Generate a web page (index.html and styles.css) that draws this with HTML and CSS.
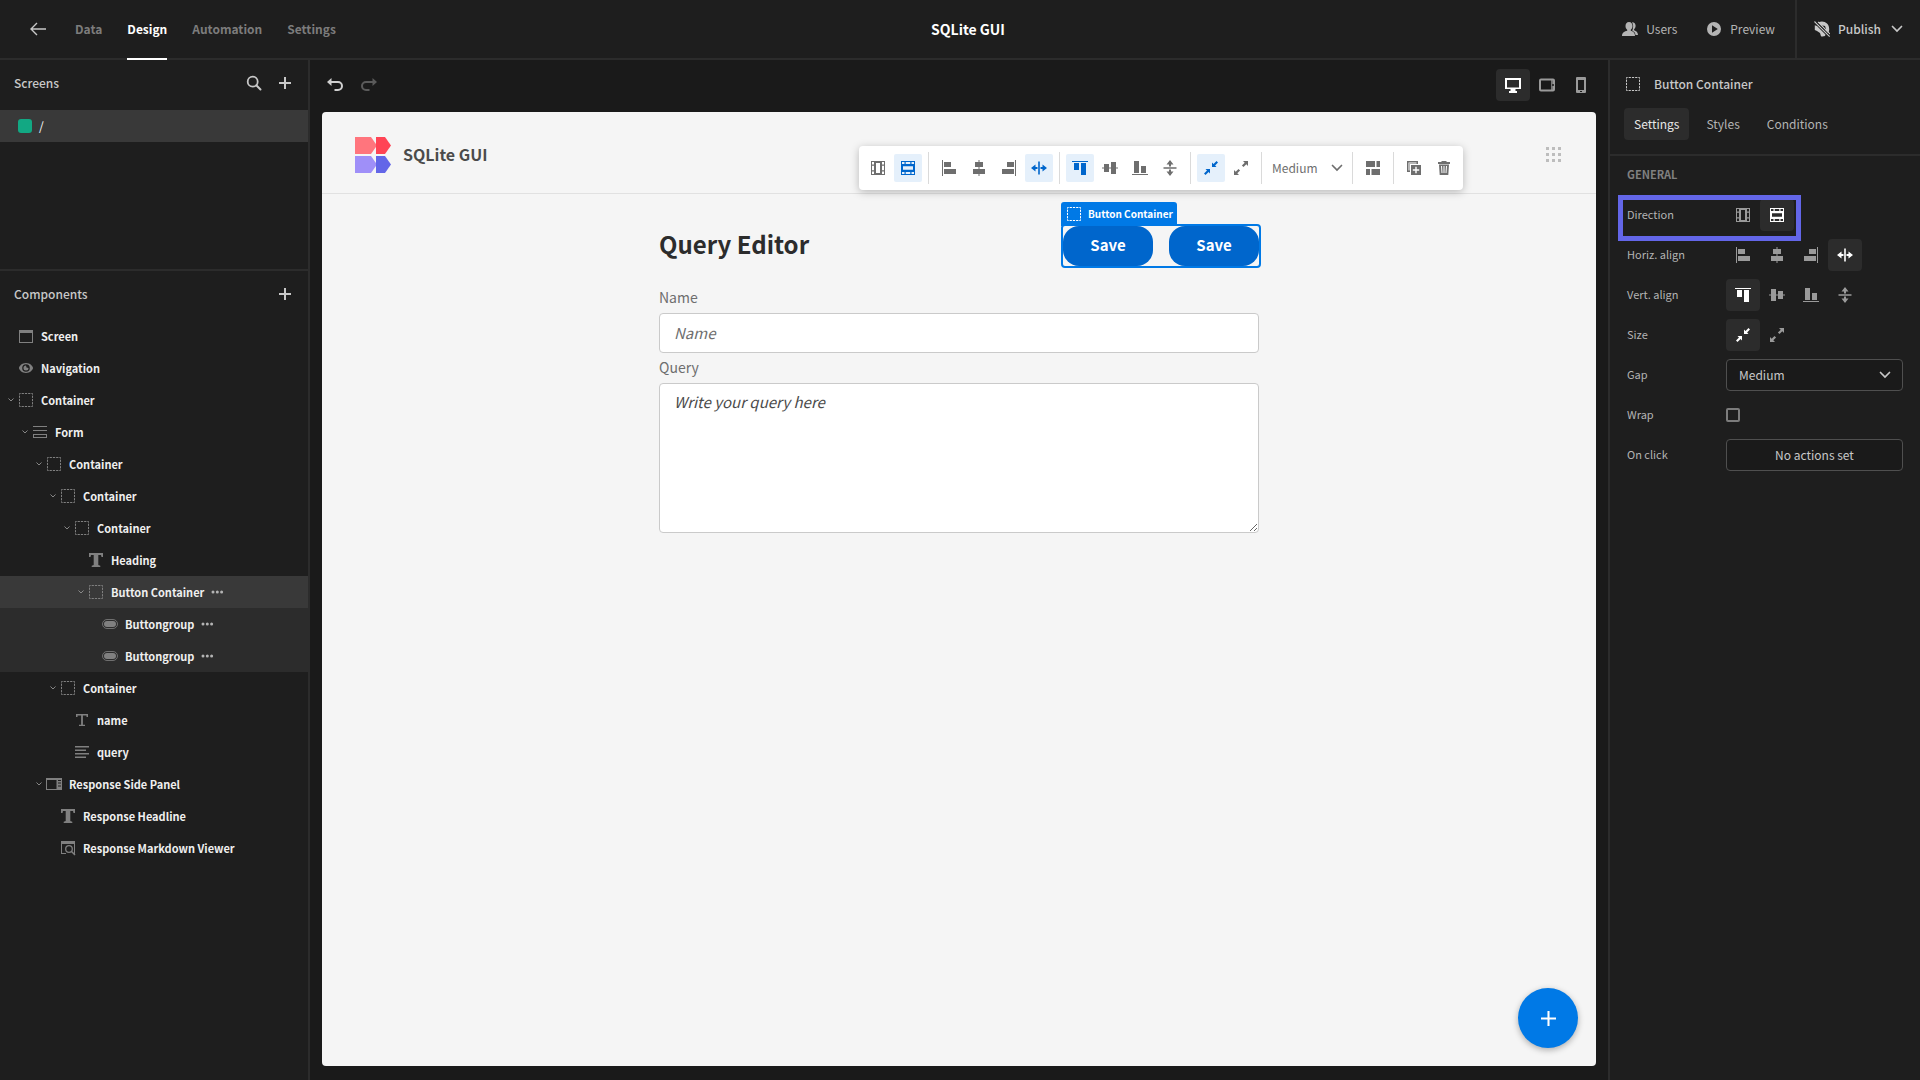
FILE: index.html
```html
<!DOCTYPE html>
<html lang="en">
<head>
<meta charset="utf-8">
<title>SQLite GUI</title>
<link rel="stylesheet" href="styles.css">
</head>
<body>
<svg class="sprite" aria-hidden="true">
  <symbol id="i-back" viewBox="0 0 16 16"><path d="M1 8h15M7 2L1 8l6 6" fill="none" stroke="currentColor" stroke-width="1.4"/></symbol>
  <symbol id="i-search" viewBox="0 0 16 16"><circle cx="6.7" cy="6.7" r="5" fill="none" stroke="currentColor" stroke-width="1.8"/><path d="M10.3 10.3L14.5 14.5" stroke="currentColor" stroke-width="2" stroke-linecap="round"/></symbol>
  <symbol id="i-plus" viewBox="0 0 16 16"><path d="M2 8h12M8 2v12" stroke="currentColor" stroke-width="2"/></symbol>
  <symbol id="i-undo" viewBox="0 0 18 16"><path d="M4 5h8a4 4 0 0 1 0 8H8.500" fill="none" stroke="currentColor" stroke-width="2"/><path d="M1 5l4.500-4v8z" fill="currentColor"/></symbol>
  <symbol id="i-users" viewBox="0 0 16 16"><path d="M10 1.200c2.500 0 3.600 1.600 3.600 3.600 0 1.500-.6 2.700-1.500 3.500v1c2 .7 3.900 1.900 3.900 4.700h-2.500c-.2-2.200-1.400-3.500-3.200-4.300C11.500 6.600 11.500 3 10 1.200z" fill="currentColor"/><path d="M7 1c2.300 0 3.500 1.700 3.500 4 0 1.700-.7 3-1.700 3.700v1c2 .6 4.200 1.700 4.200 5.300H0c0-3.600 2.700-4.700 5.200-5.300v-1C4.200 8 3.500 6.700 3.500 5c0-2.300 1.200-4 3.500-4z" fill="currentColor"/></symbol>
  <symbol id="i-play" viewBox="0 0 16 16"><path fill-rule="evenodd" d="M8 1a7 7 0 1 0 0 14A7 7 0 0 0 8 1zM6 4.300v7.400L11.800 8z" fill="currentColor"/></symbol>
  <symbol id="i-globe-off" viewBox="0 0 16 16"><path d="M4.500 1.300c5-2.300 10.700.7 10.700 6.700 0 2-.5 3.300-1.300 4.400L10.500 9l1.500-1-1-3-2.500-.500-1 .500z" fill="currentColor"/><path d="M.8 4.300L3 5l8.500 8.500-.5 1.500c-1.500.5-2.500.7-4 .300l-1-3.300-3-2L.8 9z" fill="currentColor"/><path d="M.5.500l15.200 15M4 1l12 12" stroke="currentColor" stroke-width="1.200"/><path d="M2 .5l14 14" stroke="#1e1e1e" stroke-width="1"/></symbol>
  <symbol id="i-chevron" viewBox="0 0 16 16"><path d="M3.500 5.500L8 10l4.500-4.500" fill="none" stroke="currentColor" stroke-width="1.700" stroke-linecap="round"/></symbol>
  <symbol id="i-desktop" viewBox="0 0 16 16"><path fill-rule="evenodd" d="M0 1h16v11h-5.500v2H12v2H4v-2h1.500v-2H0zM2 3v7.500h12V3z" fill="currentColor"/></symbol>
  <symbol id="i-tablet" viewBox="0 0 16 16"><rect x="1" y="2.500" width="14" height="11" rx="1" fill="none" stroke="currentColor" stroke-width="2"/><path d="M13 3v10" stroke="currentColor" stroke-width="1.500"/><circle cx="14" cy="8" r="1" fill="#1a1a1a"/></symbol>
  <symbol id="i-phone" viewBox="0 0 16 16"><path fill-rule="evenodd" d="M4 0h8a1 1 0 0 1 1 1v14a1 1 0 0 1-1 1H4a1 1 0 0 1-1-1V1a1 1 0 0 1 1-1zm1 3v10h6V3zm2 11v1h2v-1z" fill="currentColor"/></symbol>
  <symbol id="i-screen" viewBox="0 0 16 16"><path fill-rule="evenodd" d="M1 2h14v13H1zM2 5v9h12V5z" fill="currentColor"/></symbol>
  <symbol id="i-eye" viewBox="0 0 16 16"><path fill-rule="evenodd" d="M8 3c4 0 7 3.200 7 5s-3 5-7 5-7-3.200-7-5 3-5 7-5zm0 1.200a3.800 3.800 0 1 0 0 7.600 3.800 3.800 0 0 0 0-7.600z" fill="currentColor"/><path d="M8 5.500a2.500 2.500 0 1 0 2.500 2.500L8.500 7.600z" fill="currentColor"/></symbol>
  <symbol id="i-box" viewBox="0 0 16 16"><rect x="1.500" y="1.500" width="13" height="13" fill="none" stroke="currentColor" stroke-width="1" stroke-dasharray="2.250 1" stroke-dashoffset="1.100"/></symbol>
  <symbol id="i-form" viewBox="0 0 16 16"><path d="M1 2.500h14M1 6.500h14" stroke="currentColor" stroke-width="1.200"/><rect x="1.500" y="10.500" width="13" height="3" fill="none" stroke="currentColor"/></symbol>
  <symbol id="i-heading" viewBox="0 0 16 16"><path d="M1 1h14v4h-1.500L13 3H10.300v10l2 .8V15H3.700v-1.200l2-.8V3H3l-.5 2H1z" fill="currentColor"/></symbol>
  <symbol id="i-type" viewBox="0 0 16 16"><path d="M2 2h12v3h-1.500V3.500H8.900v9.300H11V14H5v-1.200h2.100V3.500H3.500V5H2z" fill="currentColor"/></symbol>
  <symbol id="i-pill" viewBox="0 0 16 16"><rect x=".5" y="3.500" width="15" height="9" rx="4.500" fill="none" stroke="currentColor" stroke-width=".8"/><rect x="2" y="5" width="12" height="6" rx="3" fill="currentColor"/></symbol>
  <symbol id="i-lines" viewBox="0 0 16 16"><path d="M1 2h14v1.500H1zM1 5.500h11V7H1zM1 9h14v1.500H1zM1 12.500h11V14H1z" fill="currentColor"/></symbol>
  <symbol id="i-panel" viewBox="0 0 16 16"><path fill-rule="evenodd" d="M0 2h16v12H0zm1 2v9h9.500V4zm11 0v1h3V4zm0 2.500v1h3v-1zm0 3v1h3v-1z" fill="currentColor"/></symbol>
  <symbol id="i-preview" viewBox="0 0 16 16"><path d="M1 1h14v13h-1V4H2v9h4v1H1z" fill="currentColor"/><circle cx="9" cy="9" r="3.300" fill="none" stroke="currentColor" stroke-width="1.300"/><path d="M11.300 11.300L15 15" stroke="currentColor" stroke-width="1.500"/></symbol>
  <symbol id="i-more" viewBox="0 0 16 16"><g fill="currentColor"><circle cx="4" cy="8" r="1.500"/><circle cx="8.300" cy="8" r="1.500"/><circle cx="12.600" cy="8" r="1.500"/></g></symbol>
  <symbol id="i-cols" viewBox="0 0 16 16"><path fill-rule="evenodd" d="M1 1h14v14H1zm1 1v2.500h2V2zm0 3.700v4.600h2V5.700zm0 5.800V14h2v-2.500zM6 3v10h4V3zm6-1v2.500h2V2zm0 3.700v4.600h2V5.700zm0 5.800V14h2v-2.500z" fill="currentColor"/></symbol>
  <symbol id="i-rows" viewBox="0 0 16 16"><path fill-rule="evenodd" d="M1 1h14v14H1zm1 1v2h2.500V2zm3.700 0v2h4.600V2zm5.800 0v2H14V2zM3 6.300v3.400h10V6.300zM2 12v2h2.500v-2zm3.700 0v2h4.600v-2zm5.800 0v2H14v-2z" fill="currentColor"/></symbol>
  <symbol id="i-left" viewBox="0 0 16 16"><path d="M1 0h1v16H1zM3 2h7v5H3zM3 9h12v5H3z" fill="currentColor"/></symbol>
  <symbol id="i-center" viewBox="0 0 16 16"><path d="M7.500 0h1v16h-1zM4 2h8v5H4zM2 9h12v5H2z" fill="currentColor"/></symbol>
  <symbol id="i-stretch" viewBox="0 0 16 16"><path d="M7.200 1.500h1.600v13H7.200zM0 8l4.500-3.500V7h2v2h-2v2.500zM16 8l-4.500-3.500V7h-2v2h2v2.500z" fill="currentColor"/></symbol>
  <symbol id="i-shrink" viewBox="0 0 16 16"><path d="M9 2.500V7h4.500l-1.400-1.400L15 2.500 13.500 1l-3 2.900zM2.500 9H7v4.500l-1.400-1.400L2.500 15 1 13.500l3-3z" fill="currentColor"/></symbol>
  <symbol id="i-grow" viewBox="0 0 16 16"><path d="M10 1h5v5l-1.700-1.700-2.800 2.800-1.600-1.600 2.800-2.800zM1 10v5h5l-1.700-1.700 2.800-2.800-1.600-1.600-2.800 2.800z" fill="currentColor"/></symbol>
  <symbol id="i-layout" viewBox="0 0 16 16"><path d="M1 1h9v6H1zM11.500 1H15v6h-3.500zM1 9h4v6H1zM6.500 9H15v6H6.500z" fill="currentColor"/></symbol>
  <symbol id="i-duplicate" viewBox="0 0 16 16"><path d="M1 1h11v3h-1.500V2.500h-8v8H4V12H1z" fill="currentColor"/><path d="M3 3h9v1H4v7H3z" fill="currentColor" opacity=".5"/><path fill-rule="evenodd" d="M5 5h10v10H5zm4.300 1.800v2.500H6.800v1.400h2.500v2.500h1.400v-2.500h2.500V9.300h-2.500V6.800z" fill="currentColor"/></symbol>
  <symbol id="i-trash" viewBox="0 0 16 16"><path fill-rule="evenodd" d="M5.500 2V1h5v1H14v2H2V2zM3 4.500h10L12.300 15H3.700zM5 6l.5 7h1L6 6zm2.500 0v7h1V6zM10 6l-.5 7h1L11 6z" fill="currentColor"/></symbol>
</svg>

<div class="builder">
  <header class="topbar">
    <nav class="topnav">
      <a class="back" href="#" aria-label="Back"><svg class="icon"><use href="#i-back"/></svg></a>
      <a class="toptab" href="#">Data</a>
      <a class="toptab active" href="#">Design</a>
      <a class="toptab" href="#">Automation</a>
      <a class="toptab" href="#">Settings</a>
    </nav>
    <h1 class="apptitle">SQLite GUI</h1>
    <div class="topactions">
      <button class="action"><svg class="icon"><use href="#i-users"/></svg>Users</button>
      <button class="action"><svg class="icon"><use href="#i-play"/></svg>Preview</button>
      <button class="action publish"><svg class="icon"><use href="#i-globe-off"/></svg>Publish<svg class="icon"><use href="#i-chevron"/></svg></button>
    </div>
  </header>

  <aside class="left">
    <section class="screens">
      <div class="panelhead">
        <h2>Screens</h2>
        <button aria-label="Search"><svg class="icon"><use href="#i-search"/></svg></button>
        <button aria-label="Add screen"><svg class="icon"><use href="#i-plus"/></svg></button>
      </div>
      <a class="screenrow" href="#"><span class="dot"></span>/</a>
    </section>
    <section class="components">
      <div class="panelhead">
        <h2>Components</h2>
        <button aria-label="Add component"><svg class="icon"><use href="#i-plus"/></svg></button>
      </div>
      <ul class="tree">
        <li style="--level:0"><svg class="arrow"></svg><svg class="icon"><use href="#i-screen"/></svg>Screen</li>
        <li style="--level:0"><svg class="arrow"></svg><svg class="icon"><use href="#i-eye"/></svg>Navigation</li>
        <li style="--level:0"><svg class="arrow"><use href="#i-chevron"/></svg><svg class="icon"><use href="#i-box"/></svg>Container</li>
        <li style="--level:1"><svg class="arrow"><use href="#i-chevron"/></svg><svg class="icon"><use href="#i-form"/></svg>Form</li>
        <li style="--level:2"><svg class="arrow"><use href="#i-chevron"/></svg><svg class="icon"><use href="#i-box"/></svg>Container</li>
        <li style="--level:3"><svg class="arrow"><use href="#i-chevron"/></svg><svg class="icon"><use href="#i-box"/></svg>Container</li>
        <li style="--level:4"><svg class="arrow"><use href="#i-chevron"/></svg><svg class="icon"><use href="#i-box"/></svg>Container</li>
        <li style="--level:5"><svg class="arrow"></svg><svg class="icon"><use href="#i-heading"/></svg>Heading</li>
        <li class="selected" style="--level:5"><svg class="arrow"><use href="#i-chevron"/></svg><svg class="icon"><use href="#i-box"/></svg>Button Container<button aria-label="More"><svg class="icon"><use href="#i-more"/></svg></button></li>
        <li class="child" style="--level:6"><svg class="arrow"></svg><svg class="icon"><use href="#i-pill"/></svg>Buttongroup<button aria-label="More"><svg class="icon"><use href="#i-more"/></svg></button></li>
        <li class="child" style="--level:6"><svg class="arrow"></svg><svg class="icon"><use href="#i-pill"/></svg>Buttongroup<button aria-label="More"><svg class="icon"><use href="#i-more"/></svg></button></li>
        <li style="--level:3"><svg class="arrow"><use href="#i-chevron"/></svg><svg class="icon"><use href="#i-box"/></svg>Container</li>
        <li style="--level:4"><svg class="arrow"></svg><svg class="icon"><use href="#i-type"/></svg>name</li>
        <li style="--level:4"><svg class="arrow"></svg><svg class="icon"><use href="#i-lines"/></svg>query</li>
        <li style="--level:2"><svg class="arrow"><use href="#i-chevron"/></svg><svg class="icon"><use href="#i-panel"/></svg>Response Side Panel</li>
        <li style="--level:3"><svg class="arrow"></svg><svg class="icon"><use href="#i-heading"/></svg>Response Headline</li>
        <li style="--level:3"><svg class="arrow"></svg><svg class="icon"><use href="#i-preview"/></svg>Response Markdown Viewer</li>
      </ul>
    </section>
  </aside>

  <main class="stage">
    <div class="stagebar">
      <button class="undo" aria-label="Undo"><svg class="icon wide"><use href="#i-undo"/></svg></button>
      <button class="undo redo" aria-label="Redo" disabled><svg class="icon wide flip"><use href="#i-undo"/></svg></button>
      <div class="devices">
        <button class="iconbtn on" aria-label="Desktop"><svg class="icon"><use href="#i-desktop"/></svg></button>
        <button class="iconbtn" aria-label="Tablet"><svg class="icon"><use href="#i-tablet"/></svg></button>
        <button class="iconbtn" aria-label="Mobile"><svg class="icon"><use href="#i-phone"/></svg></button>
      </div>
    </div>

    <div class="canvas">
      <header class="apphead">
        <svg class="logo" viewBox="0 0 36 36" aria-hidden="true">
          <path d="M0 0h16l6 8.500-6 8.500H0z" fill="#ff757d"/><path d="M21 0h9l6 8.500-6 8.500h-9z" fill="#ff4455"/>
          <path d="M0 19h16l6 8.500-6 8.500H0z" fill="#9f8ff8"/><path d="M21 19h9l6 8.500-6 8.500h-9z" fill="#6366e8"/>
        </svg>
        <span class="appname">SQLite GUI</span>
        <svg class="appgrid" viewBox="0 0 15 15" aria-hidden="true"><path d="M0 0h3v3H0zM6 0h3v3H6zM12 0h3v3h-3zM0 6h3v3H0zM6 6h3v3H6zM12 6h3v3h-3zM0 12h3v3H0zM6 12h3v3H6zM12 12h3v3h-3z" fill="#bdbdbd"/></svg>
      </header>

      <form class="editor">
        <div class="editorhead">
          <h2>Query Editor</h2>
          <div class="selection">
            <span class="tag"><svg class="icon"><use href="#i-box"/></svg>Button Container</span>
            <button type="button" class="save">Save</button>
            <button type="button" class="save">Save</button>
          </div>
        </div>
        <label for="qname">Name</label>
        <input id="qname" type="text" placeholder="Name">
        <label for="qtext">Query</label>
        <textarea id="qtext" placeholder="Write your query here"></textarea>
      </form>

      <div class="floatbar" role="toolbar" aria-label="Layout">
        <div class="group">
          <button aria-label="Column"><svg class="icon"><use href="#i-cols"/></svg></button>
          <button class="on" aria-label="Row"><svg class="icon"><use href="#i-rows"/></svg></button>
        </div>
        <div class="group">
          <button aria-label="Left"><svg class="icon"><use href="#i-left"/></svg></button>
          <button aria-label="Center"><svg class="icon"><use href="#i-center"/></svg></button>
          <button aria-label="Right"><svg class="icon flip"><use href="#i-left"/></svg></button>
          <button class="on" aria-label="Stretch"><svg class="icon"><use href="#i-stretch"/></svg></button>
        </div>
        <div class="group">
          <button class="on" aria-label="Top"><svg class="icon vtop"><use href="#i-left"/></svg></button>
          <button aria-label="Middle"><svg class="icon vtop"><use href="#i-center"/></svg></button>
          <button aria-label="Bottom"><svg class="icon vside"><use href="#i-left"/></svg></button>
          <button aria-label="Stretch vertically"><svg class="icon turn"><use href="#i-stretch"/></svg></button>
        </div>
        <div class="group">
          <button class="on" aria-label="Shrink"><svg class="icon"><use href="#i-shrink"/></svg></button>
          <button aria-label="Grow"><svg class="icon"><use href="#i-grow"/></svg></button>
        </div>
        <div class="group">
          <div class="gapselect"><select aria-label="Gap"><option>Medium</option></select><svg class="icon"><use href="#i-chevron"/></svg></div>
        </div>
        <div class="group">
          <button aria-label="Eject"><svg class="icon"><use href="#i-layout"/></svg></button>
        </div>
        <div class="group">
          <button aria-label="Duplicate"><svg class="icon"><use href="#i-duplicate"/></svg></button>
          <button aria-label="Delete"><svg class="icon"><use href="#i-trash"/></svg></button>
        </div>
      </div>

      <button class="fab" aria-label="Add"><svg viewBox="0 0 16 16"><path d="M0 8h16M8 0v16" stroke="currentColor" stroke-width="2.200"/></svg></button>
    </div>
  </main>

  <aside class="right">
    <div class="righthead"><svg class="icon"><use href="#i-box"/></svg><h2>Button Container</h2></div>
    <div class="tabs">
      <button class="on">Settings</button><button>Styles</button><button>Conditions</button>
    </div>
    <div class="settings">
      <h3>GENERAL</h3>
      <div class="row marked">
        <span class="name">Direction</span>
        <div class="choices">
          <button class="iconbtn" aria-label="Column"><svg class="icon"><use href="#i-cols"/></svg></button>
          <button class="iconbtn on" aria-label="Row"><svg class="icon"><use href="#i-rows"/></svg></button>
        </div>
      </div>
      <div class="row">
        <span class="name">Horiz. align</span>
        <div class="choices">
          <button class="iconbtn" aria-label="Left"><svg class="icon"><use href="#i-left"/></svg></button>
          <button class="iconbtn" aria-label="Center"><svg class="icon"><use href="#i-center"/></svg></button>
          <button class="iconbtn" aria-label="Right"><svg class="icon flip"><use href="#i-left"/></svg></button>
          <button class="iconbtn on" aria-label="Stretch"><svg class="icon"><use href="#i-stretch"/></svg></button>
        </div>
      </div>
      <div class="row">
        <span class="name">Vert. align</span>
        <div class="choices">
          <button class="iconbtn on" aria-label="Top"><svg class="icon vtop"><use href="#i-left"/></svg></button>
          <button class="iconbtn" aria-label="Middle"><svg class="icon vside"><use href="#i-center"/></svg></button>
          <button class="iconbtn" aria-label="Bottom"><svg class="icon vbottom"><use href="#i-left"/></svg></button>
          <button class="iconbtn" aria-label="Stretch"><svg class="icon turn"><use href="#i-stretch"/></svg></button>
        </div>
      </div>
      <div class="row">
        <span class="name">Size</span>
        <div class="choices">
          <button class="iconbtn on" aria-label="Shrink"><svg class="icon"><use href="#i-shrink"/></svg></button>
          <button class="iconbtn" aria-label="Grow"><svg class="icon"><use href="#i-grow"/></svg></button>
        </div>
      </div>
      <div class="row">
        <label class="name" for="gap">Gap</label>
        <div class="gapselect boxed"><select id="gap"><option>Medium</option></select><svg class="icon"><use href="#i-chevron"/></svg></div>
      </div>
      <div class="row">
        <label class="name" for="wrap">Wrap</label>
        <input id="wrap" type="checkbox">
      </div>
      <div class="row">
        <span class="name">On click</span>
        <button class="noaction">No actions set</button>
      </div>
    </div>
  </aside>
</div>
</body>
</html>
```
FILE: styles.css
```css
*, *::after { box-sizing: border-box; }
body {
  margin: 0;
  background: #1a1a1a;
  color: #c8c8c8;
  font-family: "Noto Sans CJK SC", "Noto Sans", sans-serif;
  font-size: 12px;
  line-height: 16px;
}
h1, h2, h3, ul { margin: 0; padding: 0; font-size: inherit; }
ul { list-style: none; }
a { color: inherit; text-decoration: none; }
button, input, select, textarea { font: inherit; color: inherit; }
button { border: 0; padding: 0; background: none; }
.sprite { position: absolute; width: 0; height: 0; }
.icon { display: block; flex: none; width: 16px; height: 16px; }
.icon.wide { width: 18px; }
.flip { transform: scaleX(-1); }
.turn { transform: rotate(90deg); }
.vtop { transform: matrix(0, 1, 1, 0, 0, 0); }
.vside, .vbottom { transform: matrix(0, -1, -1, 0, 0, 0); }

.builder {
  display: grid;
  grid-template-columns: 310px 1fr 312px;
  grid-template-rows: 60px 1fr;
  min-height: 100vh;
}

/* Top bar */
.topbar {
  grid-column: 1 / -1;
  display: grid;
  grid-template-columns: 1fr auto 1fr;
  padding-left: 16px;
  background: #1e1e1e;
  border-bottom: 2px solid #2c2c2c;
}
.topnav { display: flex; align-items: center; gap: 25px; padding-left: 14px; }
.back { margin-right: 4px; color: #c8c8c8; }
.toptab { height: 60px; padding-top: 21px; margin-bottom: -2px; font-weight: 600; color: #7c7c7c; }
.toptab.active { color: #fff; border-bottom: 2px solid #fff; }
.apptitle { align-self: center; font-size: 14px; font-weight: 600; color: #fff; }
.topactions { display: flex; justify-content: flex-end; }
.action { display: flex; align-items: center; gap: 8px; margin-right: 29px; color: #b4b4b4; }
.action.publish { margin: 0 0 0 -9px; padding: 0 15px 0 17px; border-left: 2px solid #2c2c2c; color: #c8c8c8; font-weight: 500; }

/* Left panel */
.left { background: #1e1e1e; border-right: 2px solid #2c2c2c; }
.screens { height: 211px; border-bottom: 2px solid #2c2c2c; }
.panelhead { display: flex; align-items: center; gap: 15px; padding: 0 15px 0 14px; height: 46px; }
.panelhead h2 { flex: 1; font-size: 12px; font-weight: 500; }
.screenrow { display: flex; align-items: center; gap: 7px; height: 32px; margin-top: 4px; padding-left: 18px; background: #393939; color: #fff; }
.dot { width: 14px; height: 14px; border-radius: 3px; background: #12a883; }
.tree { margin-top: 3px; }
.tree li {
  display: flex;
  align-items: center;
  height: 32px;
  padding-left: calc(7px + var(--level) * 14px);
  font-size: 11px;
  font-weight: 600;
  color: #efefef;
}
.tree .arrow { flex: none; width: 8px; height: 8px; margin-right: 3px; color: #999; }
.tree .icon { margin-right: 7px; color: #808080; }
.tree button { margin-left: 5px; }
.tree button .icon { color: #b4b4b4; }
.tree .selected { background: #393939; }
.tree .child { background: #2c2c2c; }

/* Preview stage */
.stage { display: flex; flex-direction: column; padding: 0 12px 14px; }
.stagebar { display: flex; align-items: center; height: 52px; gap: 16px; padding: 0 0 3px 4px; }
.undo { color: #d0d0d0; }
.redo { color: #5a5a5a; }
.devices { display: flex; margin: 0 -2px 0 auto; }
.iconbtn { display: flex; align-items: center; justify-content: center; width: 34px; height: 32px; border-radius: 4px; color: #9a9a9a; }
.iconbtn.on { background: #2c2c2c; color: #fff; }
.canvas { position: relative; flex: 1; background: #f5f5f5; border-radius: 4px; color: #4b4b4b; }
.apphead { display: flex; align-items: center; height: 82px; padding: 4px 35px 0 33px; border-bottom: 1px solid #e1e1e1; }
.logo { width: 36px; height: 36px; margin-right: 12px; }
.appname { padding-bottom: 2px; font-size: 16px; line-height: 24px; font-weight: 600; }
.appgrid { width: 15px; height: 15px; margin-left: auto; }

.editor { display: flex; flex-direction: column; width: 600px; max-width: 100%; margin: 32px auto 0; }
.editorhead { display: flex; align-items: center; justify-content: space-between; height: 40px; }
.editorhead h2 { padding-bottom: 4px; font-size: 24px; line-height: 32px; font-weight: 600; color: #2c2c2c; }
.selection { position: relative; display: flex; gap: 16px; outline: 2px solid #0079e6; border-radius: 2px; }
.tag { position: absolute; left: -2px; bottom: 40px; display: flex; align-items: center; gap: 6px; height: 24px; padding: 0 4px 0 5px; border-radius: 3px 3px 0 0; background: #0079e6; color: #fff; font-size: 10px; font-weight: 600; white-space: nowrap; }
.save { width: 90px; height: 40px; padding-bottom: 2px; border-radius: 16px; background: #0066cc; color: #fff; font-size: 15px; font-weight: 600; }
.editor label { padding-bottom: 2px; font-size: 14px; line-height: 28px; color: #6e6e6e; }
.editor label[for="qname"] { margin-top: 17px; }
.editor input, .editor textarea { display: block; width: 100%; padding: 6px 14px; border: 1px solid #cacaca; border-radius: 4px; background: #fff; font-size: 15px; line-height: 24px; }
.editor input { height: 40px; padding-bottom: 8px; }
.editor textarea { height: 150px; }
.editor ::placeholder { font-style: italic; color: #6e6e6e; opacity: 1; }
.editor textarea::placeholder { color: #4b4b4b; }

.floatbar { position: absolute; top: 34px; right: 133px; display: flex; align-items: center; height: 44px; padding: 0 5px; border-radius: 4px; background: #fff; box-shadow: 0 2px 8px rgba(0, 0, 0, 0.25); color: #6e6e6e; }
.group { display: flex; align-items: center; gap: 2px; height: 32px; }
.group + .group { margin-left: 6px; padding-left: 6px; border-left: 1px solid #dadada; }
.group button { display: flex; align-items: center; justify-content: center; width: 28px; height: 28px; border-radius: 2px; }
.group .on { background: #e5f0fb; color: #0066cc; }
.gapselect { position: relative; width: 78px; height: 28px; }
.gapselect select { width: 100%; height: 100%; padding: 0 4px; border: 0; background: none; appearance: none; }
.gapselect .icon { position: absolute; right: 1px; top: 6px; pointer-events: none; }
.fab { position: absolute; right: 18px; bottom: 18px; display: flex; align-items: center; justify-content: center; width: 60px; height: 60px; border-radius: 50%; background: #0079e6; color: #fff; box-shadow: 0 2px 6px rgba(0, 0, 0, 0.3); }
.fab svg { width: 15px; height: 15px; }

/* Right panel */
.right { background: #1e1e1e; border-left: 2px solid #2c2c2c; }
.righthead { display: flex; align-items: center; gap: 13px; height: 48px; padding-left: 15px; }
.righthead h2 { font-size: 12px; font-weight: 500; }
.tabs { display: flex; gap: 7px; height: 48px; padding: 0 14px 14px; border-bottom: 2px solid #2c2c2c; }
.tabs button { padding: 0 10px; border-radius: 4px; color: #b4b4b4; }
.tabs .on { background: #2c2c2c; color: #e8e8e8; }
.settings { padding: 10px 17px 0; }
.settings h3 { font-size: 11px; font-weight: 600; color: #808080; }
.row { display: grid; grid-template-columns: 99px 1fr; align-items: center; height: 32px; margin-top: 8px; color: #b4b4b4; }
.row .name { padding-bottom: 2px; font-size: 11px; }
h3 + .row { margin-top: 17px; }
.choices { display: flex; }
.marked { position: relative; }
.marked::after { content: ""; position: absolute; left: -9px; top: -4px; width: 183px; height: 46px; border: 5px solid #6366e8; pointer-events: none; }
.row input { width: 14px; height: 14px; margin: 0; appearance: none; border: 2px solid #7c7c7c; border-radius: 2px; }
.boxed, .noaction { width: 100%; height: 32px; border: 1px solid #4f4f4f; border-radius: 4px; background: #1a1a1a; font-size: 12px; color: #c8c8c8; }
.boxed select { padding: 0 12px; }
.boxed .icon { right: 9px; top: 7px; }
```
